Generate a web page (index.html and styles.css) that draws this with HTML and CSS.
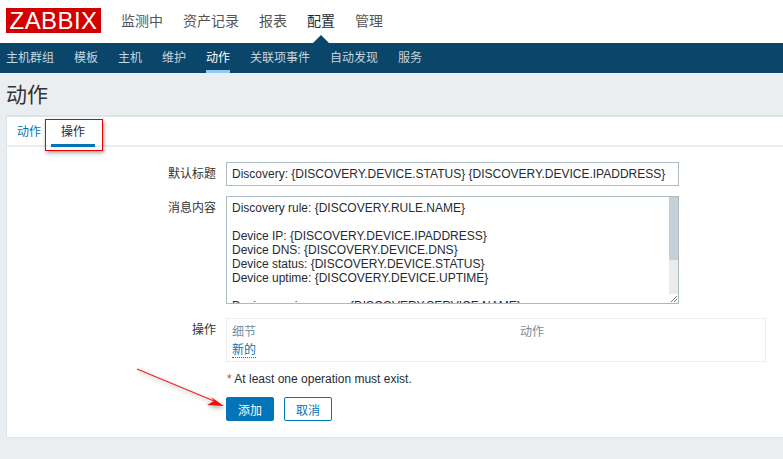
FILE: index.html
```html
<!DOCTYPE html>
<html lang="zh-CN">
<head>
    <meta charset="UTF-8">
    <title>动作</title>
    <link rel="stylesheet" href="styles.css">
</head>
<body>
<header class="top">
    <div class="logo">ZABBIX</div>
    <ul class="top-menu">
        <li>监测中</li>
        <li>资产记录</li>
        <li>报表</li>
        <li class="current">配置</li>
        <li>管理</li>
    </ul>
</header>
<nav class="sub-menu">
    <a>主机群组</a>
    <a>模板</a>
    <a>主机</a>
    <a>维护</a>
    <a class="current">动作</a>
    <a>关联项事件</a>
    <a>自动发现</a>
    <a>服务</a>
</nav>
<h1 class="title">动作</h1>
<section class="panel">
    <div class="tabs">
        <a class="tab">动作</a>
        <a class="tab current">操作</a>
    </div>
    <form class="form">
        <div class="row">
            <label class="row-label">默认标题</label>
            <div class="input">Discovery: {DISCOVERY.DEVICE.STATUS} {DISCOVERY.DEVICE.IPADDRESS}</div>
        </div>
        <div class="row row-message">
            <label class="row-label">消息内容</label>
            <div class="textarea">
                <div class="textarea-text">Discovery rule: {DISCOVERY.RULE.NAME}

Device IP: {DISCOVERY.DEVICE.IPADDRESS}
Device DNS: {DISCOVERY.DEVICE.DNS}
Device status: {DISCOVERY.DEVICE.STATUS}
Device uptime: {DISCOVERY.DEVICE.UPTIME}

Device service name: {DISCOVERY.SERVICE.NAME}</div>
                <div class="scrollbar"><div class="thumb"></div></div>
                <svg class="grip" width="9" height="9" viewBox="0 0 9 9">
                    <path d="M8 2L2 8M8 5L5 8" stroke="#777" stroke-width="1" fill="none"/>
                </svg>
            </div>
        </div>
        <div class="row">
            <label class="row-label">操作</label>
            <div class="ops">
                <div class="ops-head">
                    <span class="ops-col">细节</span>
                    <span>动作</span>
                </div>
                <a class="ops-new">新的</a>
            </div>
        </div>
        <div class="row row-note">
            <p class="note"><span class="star">*</span> At least one operation must exist.</p>
        </div>
        <div class="row row-buttons">
            <button type="button" class="btn btn-main">添加</button>
            <button type="button" class="btn">取消</button>
        </div>
    </form>
</section>
<!-- annotations drawn over the screenshot -->
<div class="mark"></div>
<svg class="arrow" width="100" height="50" viewBox="0 0 100 50">
    <path d="M1 1L78 33" stroke="#ee2222" stroke-width="1.3" fill="none"/>
    <path d="M88 38L71 37L78 33L75 29Z" fill="#ee1111"/>
</svg>
</body>
</html>
```

FILE: styles.css
```css
* {
    padding: 0;
    margin: 0;
    box-sizing: border-box;
    list-style: none;
}

body {
    height: 459px;
    overflow: hidden;
    background: #ebeef0;
    color: #1f2c33;
    font-family: "Liberation Sans", "Noto Sans CJK SC", sans-serif;
    font-size: 12px;
    position: relative;
}

.top {
    height: 43px;
    background: #fff;
    display: flex;
    align-items: flex-start;
    padding-left: 6px;
}

.logo {
    width: 95px;
    height: 25px;
    margin-top: 8px;
    background: #d40000;
    color: #fff;
    font-size: 24px;
    line-height: 26px;
    text-align: center;
    letter-spacing: 0.4px;
}

.top-menu {
    display: flex;
    gap: 20px;
    margin-left: 20px;
    padding-top: 12px;
    font-size: 14px;
    line-height: 18px;
    color: #555;
}

.top-menu .current {
    color: #1f2c33;
    position: relative;
}

.top-menu .current::after {
    content: "";
    position: absolute;
    left: 6px;
    top: 23px;
    border-left: 8px solid transparent;
    border-right: 8px solid transparent;
    border-bottom: 8px solid #0a466a;
}

.sub-menu {
    height: 30px;
    background: #0a466a;
    display: flex;
    gap: 20px;
    padding-left: 6px;
    color: #c6d5df;
    line-height: 30px;
}

.sub-menu a.current {
    color: #fff;
    border-bottom: 3px solid #8ccbf2;
}

.title {
    height: 42px;
    padding-left: 6px;
    font-size: 21px;
    font-weight: normal;
    line-height: 44px;
    color: #333;
}

.panel {
    width: 777px;
    height: 323px;
    margin-left: 6px;
    background: #fff;
    border: 1px solid #dfe4e7;
    border-top-width: 2px;
    border-right: 0;
}

.tabs {
    height: 30px;
    display: flex;
    border-bottom: 2px solid #ebeef0;
}

.tab {
    margin-left: 10px;
    padding-top: 7px;
    line-height: 16px;
    color: #0275b8;
}

.tab.current {
    width: 44px;
    height: 30px;
    padding-left: 10px;
    color: #1f2c33;
    border-bottom: 3px solid #0275b8;
}

.form {
    padding-top: 15px;
}

.row {
    display: flex;
    margin-bottom: 10px;
}

.row-message {
    margin-bottom: 14px;
}

.row-label {
    width: 219px;
    padding: 1px 10px 0 0;
    text-align: right;
    line-height: 22px;
    color: #333;
}

.input {
    width: 453px;
    height: 24px;
    border: 1px solid #acbbc2;
    padding-left: 5px;
    line-height: 22px;
    white-space: nowrap;
}

.textarea {
    width: 453px;
    height: 108px;
    border: 1px solid #acbbc2;
    position: relative;
    overflow: hidden;
}

.textarea-text {
    padding: 4px 5px;
    line-height: 14px;
    white-space: pre;
}

.scrollbar {
    position: absolute;
    right: 0;
    top: 0;
    bottom: 0;
    width: 9px;
    background: #ebebeb;
}

.thumb {
    height: 63px;
    background: #c5d0d8;
}

.grip {
    position: absolute;
    right: 0;
    bottom: 0;
    background: #fff;
}

.ops {
    width: 540px;
    height: 44px;
    border: 1px solid #ebeef0;
    padding: 6px 5px 0;
    line-height: 15px;
}

.ops-head {
    display: flex;
    color: #768d99;
    margin-bottom: 3px;
}

.ops-col {
    width: 288px;
}

.ops-new {
    color: #0275b8;
    border-bottom: 1px dotted #0275b8;
}

.row-note {
    padding-left: 220px;
    margin-top: 2px;
    margin-bottom: 11px;
}

.note {
    line-height: 14px;
}

.star {
    color: #e33734;
}

.row-buttons {
    padding-left: 219px;
    gap: 10px;
}

.btn {
    width: 48px;
    height: 24px;
    background: #fff;
    border: 1px solid #0275b8;
    border-radius: 2px;
    color: #0275b8;
    font: inherit;
}

.btn-main {
    background: #0275b8;
    color: #fff;
}

.mark {
    position: absolute;
    left: 45px;
    top: 119px;
    width: 58px;
    height: 32px;
    border: 1px solid #e80000;
    box-shadow: 1px 2px 4px rgba(0, 0, 0, .35);
}

.arrow {
    position: absolute;
    left: 136px;
    top: 368px;
    filter: drop-shadow(1px 2px 2px rgba(0, 0, 0, .35));
}
```
